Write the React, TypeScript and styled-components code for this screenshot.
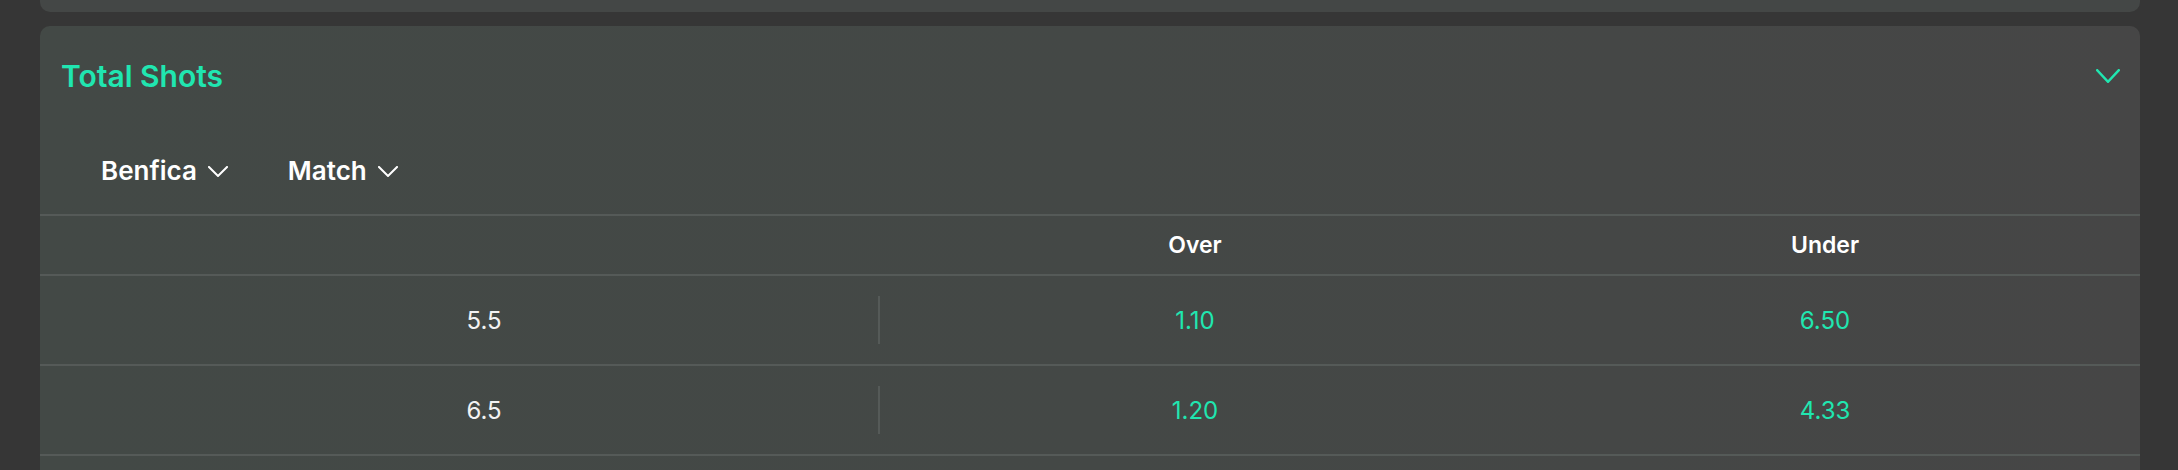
import React from "react";
import styled, { createGlobalStyle } from "styled-components";

// 마켓 데이터
interface IOddsRow {
  line: string;
  over: string;
  under: string;
}

const rows: IOddsRow[] = [
  { line: "5.5", over: "1.10", under: "6.50" },
  { line: "6.5", over: "1.20", under: "4.33" },
];

const filters = ["Benfica", "Match"];

const GREEN = "#20e6b0";
const LINE = "#555a58";

const GlobalStyle = createGlobalStyle`
  html, body {
    margin: 0;
    padding: 0;
    background: #363636;
    font-family: Inter, "Noto Sans", "Liberation Sans", sans-serif;
    -webkit-font-smoothing: antialiased;
  }
`;

const Chevron = ({ color, w, h, stroke }: { color: string; w: number; h: number; stroke: number }) => (
  <svg width={w} height={h} viewBox={`0 0 ${w} ${h}`} fill="none">
    <polyline
      points={`${stroke / 2},${stroke / 2} ${w / 2},${h - stroke / 2} ${w - stroke / 2},${stroke / 2}`}
      stroke={color}
      strokeWidth={stroke}
      strokeLinecap="square"
      strokeLinejoin="miter"
    />
  </svg>
);

export default function App() {
  return (
    <>
      <GlobalStyle />
      <Page>
        <PrevCard />
        <MarketCard>
          <MarketHeader>
            <Title>Total Shots</Title>
            <Chevron color={GREEN} w={24} h={14} stroke={2.5} />
          </MarketHeader>
          <FilterBar>
            {filters.map((f) => (
              <FilterButton key={f} type="button">
                {f}
                <Chevron color="#ffffff" w={20} h={11} stroke={2} />
              </FilterButton>
            ))}
          </FilterBar>
          <Table>
            <Row $head>
              <span />
              <span />
              <HeadCell>Over</HeadCell>
              <HeadCell>Under</HeadCell>
            </Row>
            {rows.map((r) => (
              <Row key={r.line}>
                <LineCell>{r.line}</LineCell>
                <Divider />
                <OddsCell>{r.over}</OddsCell>
                <OddsCell>{r.under}</OddsCell>
              </Row>
            ))}
            <Row />
          </Table>
        </MarketCard>
      </Page>
    </>
  );
}

const Page = styled.div`
  display: flex;
  flex-direction: column;
  gap: 14px;
  padding: 0 38px 0 40px;
  height: 470px;
  overflow: hidden;
`;

const PrevCard = styled.div`
  height: 12px;
  flex-shrink: 0;
  background: #444746;
  border-radius: 0 0 10px 10px;
`;

const MarketCard = styled.section`
  flex-shrink: 0;
  background: linear-gradient(90deg, #434946 0%, #444846 50%, #464646 100%);
  border-radius: 10px 10px 0 0;
`;

const MarketHeader = styled.header`
  display: flex;
  align-items: center;
  justify-content: space-between;
  height: 100px;
  padding: 0 20px 0 21px;
`;

const Title = styled.h2`
  margin: 0;
  font-size: 30px;
  font-weight: 600;
  color: ${GREEN};
`;

const FilterBar = styled.div`
  display: flex;
  align-items: center;
  gap: 60px;
  height: 88px;
  padding-left: 61px;
`;

const FilterButton = styled.button`
  display: flex;
  align-items: center;
  gap: 11px;
  padding: 0;
  border: 0;
  background: none;
  font-family: inherit;
  font-size: 26px;
  font-weight: 600;
  color: #ffffff;
  svg {
    margin-top: 2px;
  }
`;

const Table = styled.div`
  display: flex;
  flex-direction: column;
`;

const Row = styled.div<{ $head?: boolean }>`
  display: grid;
  grid-template-columns: 1fr 2px 30% 30%;
  align-items: center;
  height: ${(p) => (p.$head ? 58 : 88)}px;
  border-top: 2px solid ${LINE};
`;

const HeadCell = styled.div`
  text-align: center;
  font-size: 23px;
  font-weight: 600;
  color: #ffffff;
`;

const LineCell = styled.div`
  padding-left: 50px;
  text-align: center;
  font-size: 24px;
  color: #f2f2f2;
`;

const Divider = styled.div`
  width: 2px;
  height: 48px;
  background: ${LINE};
`;

const OddsCell = styled.div`
  text-align: center;
  font-size: 24px;
  color: ${GREEN};
`;
